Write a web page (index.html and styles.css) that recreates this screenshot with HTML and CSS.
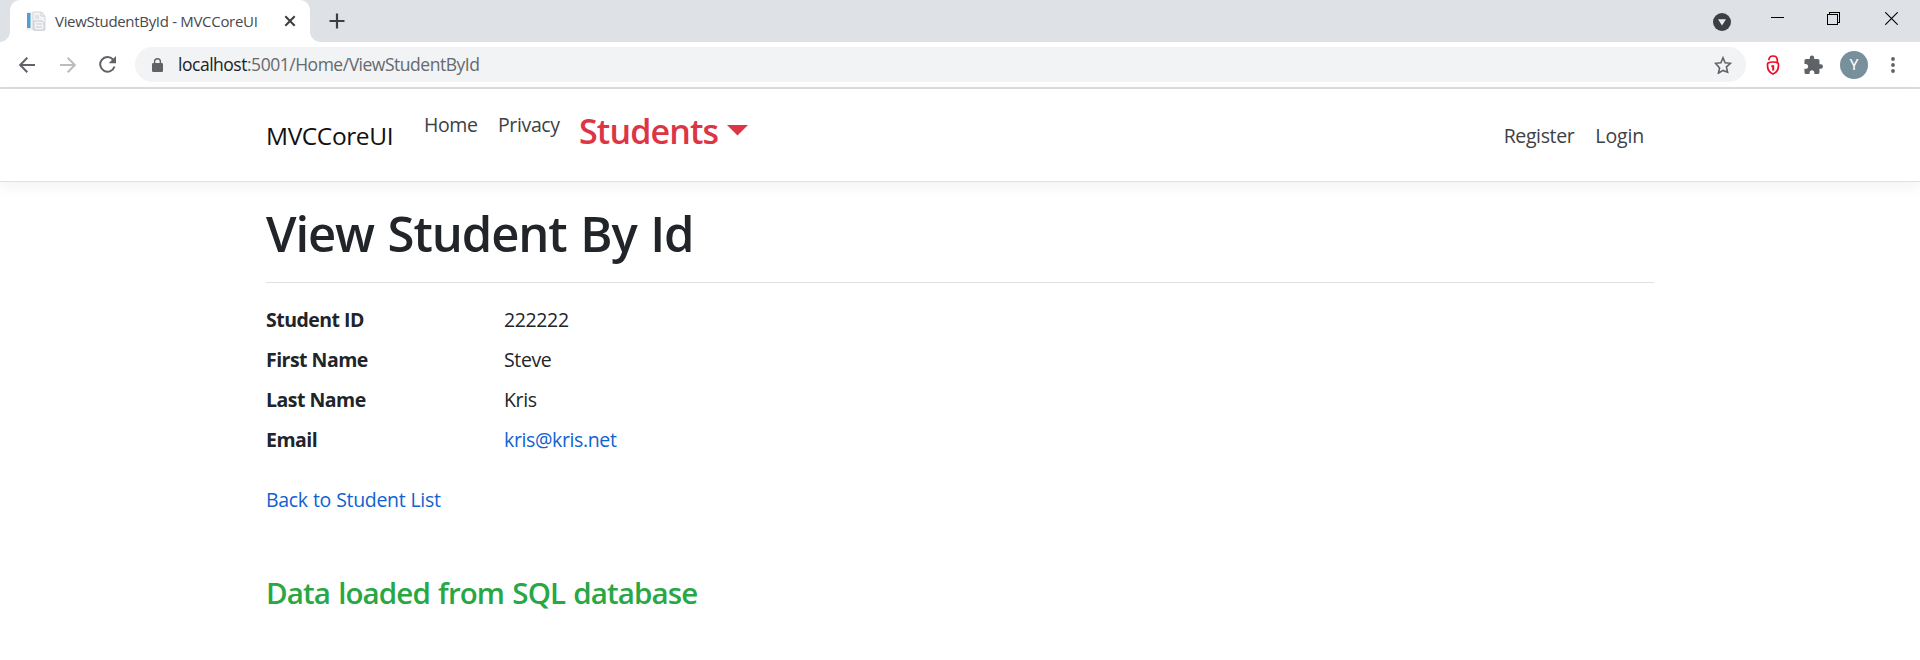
FILE: index.html
```html
<!DOCTYPE html>
<html lang="en">
<head>
<meta charset="utf-8">
<title>ViewStudentById - MVCCoreUI</title>
<link rel="stylesheet" href="styles.css">
</head>
<body>
<div class="tabstrip">
  <div class="tab">
    <svg class="favicon" width="20" height="20" viewBox="0 0 20 20"><path d="M1 1h17v18H1z" fill="#eef0f3"/><path d="M1 2h3.5v15H1z" fill="#4f9fd0"/><path d="M7 1h8l4 4v14H7z" fill="#f2f3f5" stroke="#d3d6da"/><path d="M15 1v4h4M9 5h4M9 7h4" fill="none" stroke="#ced2d7"/><path d="M8 10h8l2 2v7H8z" fill="#f4f5f7" stroke="#c3c7cd"/><path d="M10 13h6M10 16h6" stroke="#c4c8ce"/></svg>
    <span class="tab-title">ViewStudentById - MVCCoreUI</span>
    <svg class="tab-close" width="12" height="12" viewBox="0 0 12 12"><path d="M1.3 1.3l9.4 9.4M10.7 1.3l-9.4 9.4" stroke="#3c4043" stroke-width="2.1"/></svg>
  </div>
  <svg class="new-tab" width="16" height="16" viewBox="0 0 16 16"><path d="M8 .5v15M.5 8h15" stroke="#3c4043" stroke-width="2.2"/></svg>
  <div class="window-controls">
    <svg class="tab-search" width="18" height="18" viewBox="0 0 18 18"><circle cx="9" cy="9" r="9" fill="#3c4043"/><path d="M5 6.3h8L9 12.6z" fill="#e8eaed"/></svg>
    <svg class="minimize" width="13" height="13" viewBox="0 0 13 13"><path d="M0 2.5h13" stroke="#000"/></svg>
    <svg class="restore" width="13" height="13" viewBox="0 0 13 13" shape-rendering="crispEdges"><path d="M.5 2.5h10v10H.5zM2.5 2.5v-2h10v10h-2" fill="none" stroke="#000"/></svg>
    <svg class="close" width="13" height="13" viewBox="0 0 13 13"><path d="M.3 .3l12.4 12.4M12.7 .3L.3 12.7" stroke="#000" stroke-width="1.1"/></svg>
  </div>
</div>
<div class="toolbar">
  <svg class="back" width="16" height="16" viewBox="0 0 16 16"><path d="M16 8H1.4M8.3 .8L1.2 8l7.1 7.2" fill="none" stroke="#5f6368" stroke-width="2"/></svg>
  <svg class="forward" width="16" height="16" viewBox="0 0 16 16"><path d="M0 8h14.6M7.7 .8L14.8 8l-7.1 7.2" fill="none" stroke="#babcbe" stroke-width="2"/></svg>
  <svg class="reload" width="17" height="17" viewBox="0 0 17 17"><path d="M14 3.5A7.3 7.3 0 1 0 15.5 10.5" fill="none" stroke="#5f6368" stroke-width="2"/><path d="M17 0v7.3H9.7z" fill="#5f6368"/></svg>
  <div class="omnibox">
    <svg class="lock" width="11" height="14" viewBox="0 0 11 14"><path d="M2.6 6V3.6a2.9 2.9 0 0 1 5.8 0V6" fill="none" stroke="#5f6368" stroke-width="1.4"/><rect y="5" width="11" height="9" rx="1.2" fill="#5f6368"/></svg>
    <span class="url"><b class="host">localhost</b>:5001/Home/ViewStudentById</span>
    <svg class="star" width="18" height="18" viewBox="0 0 18 18"><path d="M9 1.8l2.1 5 5.4.5-4.1 3.6 1.2 5.3L9 14.4l-4.600 2.800 1.200-5.300L1.500 7.300l5.400-.5z" fill="none" stroke="#5f6368" stroke-width="1.600"/></svg>
  </div>
  <svg class="ext-lock" width="14" height="20" viewBox="0 0 14 20"><path d="M2.800 5.200C2.800 2.400 4.600 1 7 1s4.300 1.500 4.300 4.200V7" fill="none" stroke="#ee0a24" stroke-width="1.700"/><path d="M7 7c2 0 3.800.3 5.300 1.200.7 5-.6 9-5.300 10.800C2.300 17.200 1 13.200 1.700 8.200 3.200 7.300 5 7 7 7z" fill="#fff" stroke="#ee0a24" stroke-width="1.700"/><path d="M5.300 10.300h2.900v5.200H6.200v-3.200h-.9z" fill="#ee0a24"/></svg>
  <svg class="puzzle" width="19" height="19" viewBox="1.500 .5 21.500 21.500"><path d="M20.500 11H19V7c0-1.100-.9-2-2-2h-4V3.500a2.500 2.500 0 0 0-5 0V5H4c-1.100 0-1.990.9-1.990 2v3.800H3.500c1.490 0 2.700 1.210 2.700 2.700s-1.210 2.700-2.700 2.700H2V20c0 1.100.9 2 2 2h3.800v-1.500c0-1.490 1.210-2.700 2.700-2.700s2.700 1.210 2.700 2.700V22H17c1.100 0 2-.9 2-2v-4h1.500a2.500 2.500 0 0 0 0-5z" fill="#5f6368"/></svg>
  <div class="avatar">Y</div>
  <svg class="menu" width="4" height="16" viewBox="0 0 4 16"><g fill="#5f6368"><circle cx="2" cy="2" r="1.900"/><circle cx="2" cy="8" r="1.900"/><circle cx="2" cy="14" r="1.900"/></g></svg>
</div>
<header class="navbar">
  <nav class="container nav-inner">
    <a class="brand">MVCCoreUI</a>
    <a class="nav-link home">Home</a>
    <a class="nav-link privacy">Privacy</a>
    <a class="dropdown"><span class="students">Students</span><svg class="caret" width="21" height="11" viewBox="0 0 21 11"><path d="M0 0h21L10.500 10.500z" fill="#dc3545"/></svg></a>
    <div class="account"><a class="nav-link">Register</a><a class="nav-link login">Login</a></div>
  </nav>
</header>
<main class="container">
  <h1>View Student By Id</h1>
  <hr>
  <dl>
    <dt>Student ID</dt><dd>222222</dd>
    <dt>First Name</dt><dd>Steve</dd>
    <dt>Last Name</dt><dd>Kris</dd>
    <dt>Email</dt><dd><a>kris@kris.net</a></dd>
  </dl>
  <div class="back-link"><a>Back to Student List</a></div>
  <h4>Data loaded from SQL database</h4>
</main>
</body>
</html>
```
FILE: styles.css
```css
* { box-sizing: border-box; }
body { margin: 0; height: 660px; overflow: hidden; background: #fff; color: #212529; font: 19.5px/30px "Open Sans", sans-serif; letter-spacing: -.37px; }
svg { display: block; flex: none; }
.tabstrip { display: flex; height: 42px; background: #dee1e6; }
.tab { position: relative; display: flex; align-items: center; width: 300px; height: 42px; margin-left: 10px; padding-left: 16px; background: #fff; border-radius: 10px 10px 0 0; }
.tab::before, .tab::after { content: ""; position: absolute; bottom: 0; width: 10px; height: 10px; }
.tab::before { left: -10px; background: radial-gradient(circle at 0 0, #dee1e6 9.5px, #fff 10px); }
.tab::after { right: -10px; background: radial-gradient(circle at 100% 0, #dee1e6 9.5px, #fff 10px); }
.tab-title { margin: 0 0 1px 9px; font-size: 15px; line-height: 20px; letter-spacing: -.31px; color: #45494d; white-space: nowrap; }
.tab-close { position: absolute; left: 274px; top: 15px; }
.new-tab { margin: 13px 0 0 19px; }
.window-controls { display: flex; margin-left: auto; padding-right: 22px; }
.tab-search { margin: 13px 40px 0 0; }
.minimize { margin: 15px 43px 0 0; }
.restore { margin: 12px 45px 0 0; }
.close { margin-top: 12px; }
.toolbar { display: flex; align-items: center; height: 47px; padding: 0 25px 0 19px; border-bottom: 2px solid #dadce0; }
.forward { margin-left: 25px; }
.reload { margin-left: 23px; }
.omnibox { display: flex; align-items: center; width: 1611px; height: 35px; margin-left: 19px; padding: 0 14px 0 17px; background: #f1f3f4; border-radius: 18px; }
.url { margin: 0 0 1px 15px; font-size: 17.5px; line-height: 24px; letter-spacing: -.48px; color: #66696d; }
.host { font-weight: 400; color: #202124; }
.star { margin-left: auto; }
.ext-lock { margin-left: 20px; }
.puzzle { margin-left: 24px; }
.avatar { width: 28px; height: 28px; margin-left: 17px; border-radius: 50%; background: #78909c; color: #fff; font: 15px/28px Roboto, sans-serif; letter-spacing: 0; text-align: center; }
.menu { margin-left: 23px; }
.container { width: 1388px; margin: 0 266px; }
.navbar { height: 93px; border-bottom: 1px solid #dee2e6; box-shadow: 0 5px 15px rgba(0, 0, 0, .05); }
.nav-inner { display: flex; align-items: flex-start; white-space: nowrap; }
.brand { width: 158px; padding-top: 28px; font-size: 24.5px; line-height: 38px; letter-spacing: -.4px; color: #111; }
.nav-link { color: #3d4145; padding-top: 21px; }
.home { width: 74px; letter-spacing: -.4px; }
.privacy { width: 81px; }
.dropdown { display: flex; }
.students { width: 140px; padding-top: 21px; font-size: 34px; line-height: 42px; letter-spacing: -.85px; font-weight: 600; color: #dc3545; }
.caret { margin: 36px 0 0 8px; }
.account { display: flex; gap: 21px; margin-left: auto; padding: 11px 10px 0 0; }
.login { letter-spacing: -.15px; }
h1 { margin: 21px 0 0; font-size: 49px; line-height: 60px; letter-spacing: -1.1px; word-spacing: 2px; font-weight: 600; }
hr { height: 1px; margin: 19px 0 0; border: 0; background: #e0e0e0; }
dl { display: grid; grid-template-columns: 238px 1fr; row-gap: 10px; margin: 22px 0 0; }
dt { font-weight: 700; letter-spacing: -.52px; }
dd { margin: 0; }
main a { color: #0f62d0; }
.back-link { margin-top: 30px; letter-spacing: -.33px; word-spacing: .5px; }
h4 { margin: 60px 0 0; font-size: 29.5px; line-height: 36px; letter-spacing: -.9px; word-spacing: 1.5px; font-weight: 600; color: #28a745; }
```
